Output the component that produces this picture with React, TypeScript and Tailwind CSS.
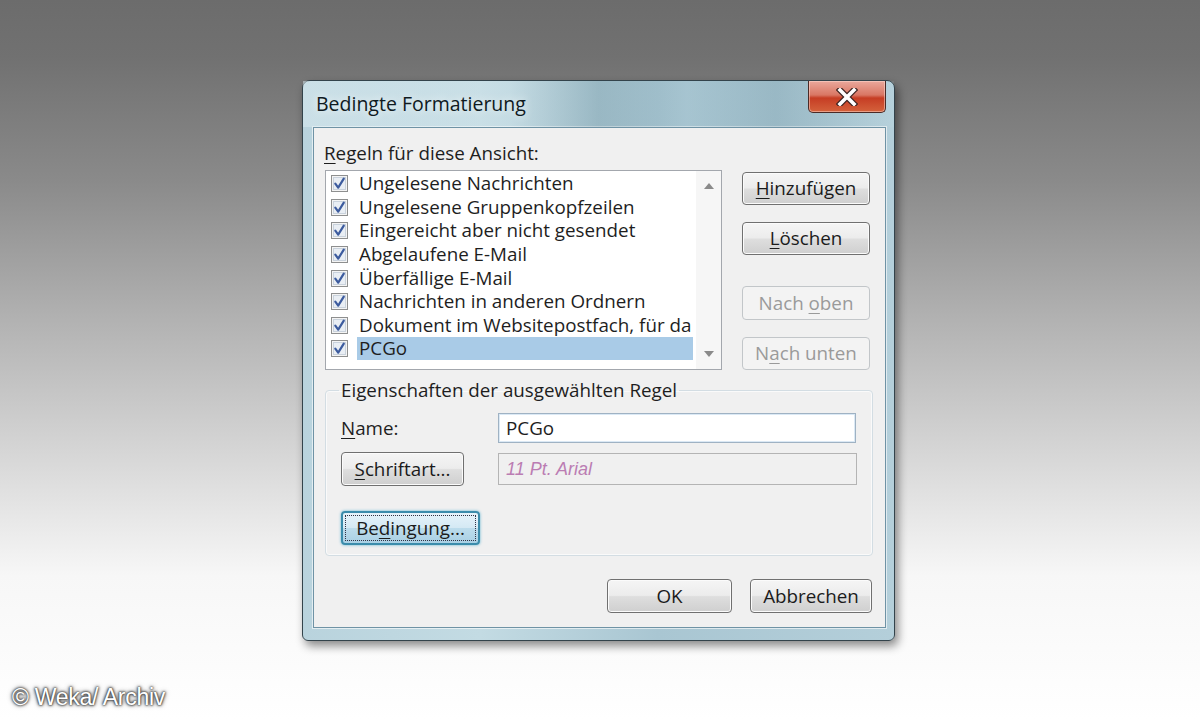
import React from "react";

const UI = { fontFamily: '"Open Sans", "Noto Sans", sans-serif' };

function Check() {
  return (
    <svg width="17" height="17" viewBox="0 0 17 17" className="shrink-0">
      <rect x="0.5" y="0.5" width="16" height="16" fill="#f4f4f4" stroke="#8e8f8f" />
      <rect x="2.5" y="2.5" width="12" height="12" fill="#e9eef4" stroke="#c9d2dc" />
      <path d="M4.3 8.6 L7.2 12.6 L12.8 3.6" fill="none" stroke="#3c5b9e" strokeWidth="2.2" strokeLinejoin="round" strokeLinecap="round" />
    </svg>
  );
}

function Btn({
  children,
  w,
  h = "h-[34px]",
  disabled = false,
  focused = false,
}: {
  children: React.ReactNode;
  w: string;
  h?: string;
  disabled?: boolean;
  focused?: boolean;
}) {
  if (disabled) {
    return (
      <div className={`${w} ${h} rounded-[4px] border border-[#c2c6c9] bg-[#f3f3f3] flex items-center justify-center text-[18.8px] text-[#9a9a9a]`}>
        {children}
      </div>
    );
  }
  if (focused) {
    return (
      <div className={`${w} ${h} rounded-[4px] border-2 border-[#3b8cab] bg-[linear-gradient(#e6f3fa_0%,#d4e9f4_50%,#bcdcec_51%,#a9d0e4_100%)] p-[2px] shadow-[0_0_3px_#5fb2d0]`}>
        <div className="w-full h-full border border-dotted border-[#334] flex items-center justify-center text-[18.8px] text-[#1b1b1b]">
          {children}
        </div>
      </div>
    );
  }
  return (
    <div className={`${w} ${h} rounded-[4px] border border-[#707070] bg-[linear-gradient(#f5f5f5_0%,#ececec_48%,#dedede_52%,#cfcfcf_100%)] shadow-[inset_0_0_0_1px_#fbfbfb] flex items-center justify-center text-[18.8px] text-[#1b1b1b]`}>
      {children}
    </div>
  );
}

const rules = [
  "Ungelesene Nachrichten",
  "Ungelesene Gruppenkopfzeilen",
  "Eingereicht aber nicht gesendet",
  "Abgelaufene E-Mail",
  "Überfällige E-Mail",
  "Nachrichten in anderen Ordnern",
  "Dokument im Websitepostfach, für da",
  "PCGo",
];

export default function App() {
  return (
    <div
      className="w-[1200px] h-[720px] relative overflow-hidden bg-[linear-gradient(to_bottom,#6c6c6c_0%,#717171_8%,#8a8a8a_25%,#b3b3b3_45%,#dadada_65%,#f7f7f7_80%,#ffffff_100%)]"
      style={UI}
    >
      <div className="pt-[80px] pl-[302px]">
        {/* dialog */}
        <div className="w-[593px] h-[561px] rounded-t-[8px] rounded-b-[6px] border border-[#33434b] shadow-[3px_5px_10px_rgba(0,0,0,0.45)] bg-[linear-gradient(to_right,#b9d3dd_0%,#c3dbe3_30%,#a9c6d2_60%,#b4cfda_100%)] flex flex-col">
          {/* title bar */}
          <div className="h-[46px] flex items-start relative bg-[linear-gradient(to_right,rgba(220,236,241,0.5)_0%,rgba(220,236,241,0.2)_35%,rgba(80,120,135,0.25)_50%,rgba(150,185,198,0.2)_65%,rgba(90,130,145,0.25)_80%,rgba(200,225,232,0.1)_100%)]">
            <div className="pl-[13px] pt-[10px] text-[19.5px] leading-[26px] text-[#0f1a1f] [text-shadow:0_0_8px_rgba(255,255,255,0.9)]">
              Bedingte Formatierung
            </div>
            <div className="ml-auto mr-[8px] w-[78px] h-[32px] rounded-b-[5px] border border-t-0 border-[#4b2a26] bg-[linear-gradient(#eaa89c_0%,#d97764_45%,#c63d24_55%,#d4623c_100%)] shadow-[inset_0_0_0_1px_rgba(255,220,210,0.5)] flex items-center justify-center">
              <svg width="22" height="18" viewBox="0 0 22 18">
                <path d="M4 2 L18 16 M18 2 L4 16" stroke="#3d2320" strokeWidth="6" strokeLinecap="square" />
                <path d="M4 2 L18 16 M18 2 L4 16" stroke="#ffffff" strokeWidth="3.6" strokeLinecap="square" />
              </svg>
            </div>
          </div>
          {/* client area */}
          <div className="ml-[10px] mr-[8px] h-[501px] border border-[#6f93a5] shadow-[0_0_0_1px_rgba(255,255,255,0.6)] bg-[#f0f0f0] pl-[11px] pt-[15px] text-[#1e1e1e]">
            <div className="h-[20px] leading-[20px] text-[18.8px] ml-[-1px]">
              <span className="underline underline-offset-[3px]">R</span>egeln für diese Ansicht:
            </div>
            <div className="mt-[7px] flex">
              {/* list */}
              <div className="w-[397px] h-[200px] border border-[#a3a7ad] bg-white flex">
                <div className="flex-1 min-w-0 pt-[1px] pl-[5px] pr-[3px]">
                  {rules.map((r, i) => (
                    <div key={r} className="h-[23.57px] flex items-center">
                      <Check />
                      <div
                        className={`ml-[9px] flex-1 min-w-0 h-[23px] pl-[2px] leading-[23px] text-[18.8px] whitespace-nowrap ${i === 6 ? "overflow-x-clip" : ""} ${i === 7 ? "bg-[#a9cbe7]" : ""}`}
                      >
                        {r}
                      </div>
                    </div>
                  ))}
                </div>
                <div className="w-[25px] h-full bg-[#f6f6f6] flex flex-col items-center justify-between py-[12px]">
                  <svg width="10" height="6" viewBox="0 0 10 6">
                    <path d="M0 6 L5 0 L10 6 Z" fill="#8a8a8a" />
                  </svg>
                  <svg width="10" height="6" viewBox="0 0 10 6">
                    <path d="M0 0 L5 6 L10 0 Z" fill="#8a8a8a" />
                  </svg>
                </div>
              </div>
              {/* buttons */}
              <div className="ml-[20px] flex flex-col pt-[2px]">
                <Btn w="w-[128px]" h="h-[33px]">
                  <span>
                    <span className="underline underline-offset-[3px]">H</span>inzufügen
                  </span>
                </Btn>
                <div className="mt-[17px]">
                  <Btn w="w-[128px]" h="h-[33px]">
                    <span>
                      <span className="underline underline-offset-[3px]">L</span>öschen
                    </span>
                  </Btn>
                </div>
                <div className="mt-[31px]">
                  <Btn w="w-[128px]" disabled>
                    <span>
                      Nach <span className="underline underline-offset-[3px]">o</span>ben
                    </span>
                  </Btn>
                </div>
                <div className="mt-[17px]">
                  <Btn w="w-[128px]" h="h-[33px]" disabled>
                    <span>
                      N<span className="underline underline-offset-[3px]">a</span>ch unten
                    </span>
                  </Btn>
                </div>
              </div>
            </div>
            {/* group */}
            <fieldset className="mt-[10px] w-[548px] border border-[#d3dde3] rounded-[4px] px-[15px] pb-[10px] shadow-[inset_0_0_0_1px_#fafafa]">
              <legend className="ml-[-2px] px-[2px] h-[20px] leading-[20px] text-[18.8px]">
                Eigenschaften der ausgewählten Regel
              </legend>
              <div className="mt-[13px] h-[30px] flex items-center">
                <div className="w-[157px] text-[18.8px]">
                  <span className="underline underline-offset-[3px]">N</span>ame:
                </div>
                <div className="w-[358px] h-[30px] border border-[#9fb2c3] shadow-[inset_0_0_0_1px_#dbe9f5] bg-white flex items-center pl-[7px] text-[18.8px]">
                  PCGo
                </div>
              </div>
              <div className="mt-[9px] h-[34px] flex items-center">
                <div className="w-[157px]">
                  <Btn w="w-[123px]">
                    <span>
                      <span className="underline underline-offset-[3px]">S</span>chriftart...
                    </span>
                  </Btn>
                </div>
                <div className="w-[359px] h-[32px] border border-[#b4b4b4] bg-[#f0f0f0] flex items-center pl-[7px] text-[18px] italic text-[#bb7db3]" style={{ fontFamily: '"Liberation Sans", Arial, sans-serif' }}>
                  11 Pt. Arial
                </div>
              </div>
              <div className="mt-[25px]">
                <Btn w="w-[139px]" focused>
                  <span>
                    Be<span className="underline underline-offset-[3px]">d</span>ingung...
                  </span>
                </Btn>
              </div>
            </fieldset>
            <div className="mt-[23px] flex justify-end pr-[13px] gap-[18px]">
              <Btn w="w-[125px]">OK</Btn>
              <Btn w="w-[122px]">Abbrechen</Btn>
            </div>
          </div>
        </div>
      </div>
      <div
        className="absolute left-[12px] top-[683px] text-[23px] leading-[28px] text-white tracking-[-0.3px] [text-shadow:0_0_3px_#333,0_0_5px_#555,0_0_2px_#000]"
        style={{ fontFamily: '"Liberation Sans", Arial, sans-serif' }}
      >
        © Weka/ Archiv
      </div>
    </div>
  );
}
